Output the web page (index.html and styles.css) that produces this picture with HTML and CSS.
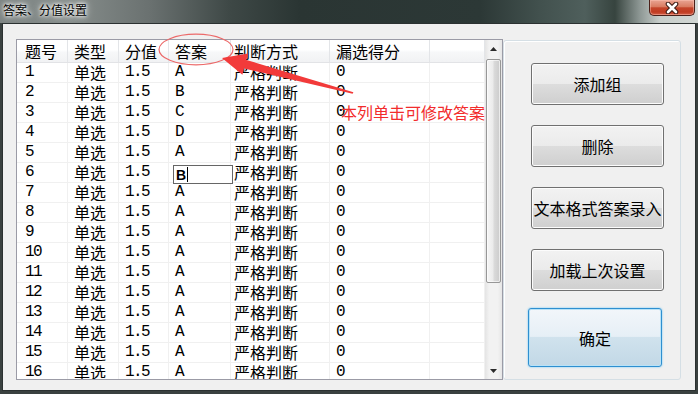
FILE: index.html
```html
<!DOCTYPE html>
<html lang="zh">
<head>
  <meta charset="UTF-8" />
  <title>答案、分值设置</title>
  <link rel="stylesheet" href="styles.css">
</head>
<body>

<div class="titlebar">
  <span class="title">答案、分值设置</span>
  <div class="close">
    <svg width="16" height="12" viewBox="0 0 16 12">
      <path d="M4 2 L12 10 M12 2 L4 10" stroke="#3b1a14" stroke-width="4.6" stroke-linecap="round"/>
      <path d="M4 2 L12 10 M12 2 L4 10" stroke="#ffffff" stroke-width="2.6" stroke-linecap="round"/>
    </svg>
  </div>
</div>

<div class="client">
  <div class="listview">
    <div class="grid">
      <div class="row head">
        <div class="cell c1">题号</div><div class="cell">类型</div><div class="cell">分值</div><div class="cell">答案</div><div class="cell c5">判断方式</div><div class="cell">漏选得分</div><div class="cell"></div>
      </div>
      <div class="row"><div class="cell c1 mono">1</div><div class="cell">单选</div><div class="cell mono">1.5</div><div class="cell mono">A</div><div class="cell c5">严格判断</div><div class="cell mono">0</div><div class="cell"></div></div>
      <div class="row"><div class="cell c1 mono">2</div><div class="cell">单选</div><div class="cell mono">1.5</div><div class="cell mono">B</div><div class="cell c5">严格判断</div><div class="cell mono">0</div><div class="cell"></div></div>
      <div class="row"><div class="cell c1 mono">3</div><div class="cell">单选</div><div class="cell mono">1.5</div><div class="cell mono">C</div><div class="cell c5">严格判断</div><div class="cell mono">0</div><div class="cell"></div></div>
      <div class="row"><div class="cell c1 mono">4</div><div class="cell">单选</div><div class="cell mono">1.5</div><div class="cell mono">D</div><div class="cell c5">严格判断</div><div class="cell mono">0</div><div class="cell"></div></div>
      <div class="row"><div class="cell c1 mono">5</div><div class="cell">单选</div><div class="cell mono">1.5</div><div class="cell mono">A</div><div class="cell c5">严格判断</div><div class="cell mono">0</div><div class="cell"></div></div>
      <div class="row"><div class="cell c1 mono">6</div><div class="cell">单选</div><div class="cell mono">1.5</div><div class="cell edit"><div class="editor">B<span class="caret"></span></div></div><div class="cell c5">严格判断</div><div class="cell mono">0</div><div class="cell"></div></div>
      <div class="row"><div class="cell c1 mono">7</div><div class="cell">单选</div><div class="cell mono">1.5</div><div class="cell mono">A</div><div class="cell c5">严格判断</div><div class="cell mono">0</div><div class="cell"></div></div>
      <div class="row"><div class="cell c1 mono">8</div><div class="cell">单选</div><div class="cell mono">1.5</div><div class="cell mono">A</div><div class="cell c5">严格判断</div><div class="cell mono">0</div><div class="cell"></div></div>
      <div class="row"><div class="cell c1 mono">9</div><div class="cell">单选</div><div class="cell mono">1.5</div><div class="cell mono">A</div><div class="cell c5">严格判断</div><div class="cell mono">0</div><div class="cell"></div></div>
      <div class="row"><div class="cell c1 mono">10</div><div class="cell">单选</div><div class="cell mono">1.5</div><div class="cell mono">A</div><div class="cell c5">严格判断</div><div class="cell mono">0</div><div class="cell"></div></div>
      <div class="row"><div class="cell c1 mono">11</div><div class="cell">单选</div><div class="cell mono">1.5</div><div class="cell mono">A</div><div class="cell c5">严格判断</div><div class="cell mono">0</div><div class="cell"></div></div>
      <div class="row"><div class="cell c1 mono">12</div><div class="cell">单选</div><div class="cell mono">1.5</div><div class="cell mono">A</div><div class="cell c5">严格判断</div><div class="cell mono">0</div><div class="cell"></div></div>
      <div class="row"><div class="cell c1 mono">13</div><div class="cell">单选</div><div class="cell mono">1.5</div><div class="cell mono">A</div><div class="cell c5">严格判断</div><div class="cell mono">0</div><div class="cell"></div></div>
      <div class="row"><div class="cell c1 mono">14</div><div class="cell">单选</div><div class="cell mono">1.5</div><div class="cell mono">A</div><div class="cell c5">严格判断</div><div class="cell mono">0</div><div class="cell"></div></div>
      <div class="row"><div class="cell c1 mono">15</div><div class="cell">单选</div><div class="cell mono">1.5</div><div class="cell mono">A</div><div class="cell c5">严格判断</div><div class="cell mono">0</div><div class="cell"></div></div>
      <div class="row"><div class="cell c1 mono">16</div><div class="cell">单选</div><div class="cell mono">1.5</div><div class="cell mono">A</div><div class="cell c5">严格判断</div><div class="cell mono">0</div><div class="cell"></div></div>
    </div>
    <div class="vscroll">
      <div class="arrow"><svg width="7" height="4" viewBox="0 0 7 4"><path d="M3.5 0 L7 4 L0 4 Z" fill="#2a2a2a"/></svg></div>
      <div class="thumb"></div>
      <div class="track"></div>
      <div class="arrow"><svg width="7" height="4" viewBox="0 0 7 4"><path d="M0 0 L7 0 L3.5 4 Z" fill="#2a2a2a"/></svg></div>
    </div>
  </div>

  <div class="panel">
    <button class="btn">添加组</button>
    <button class="btn">删除</button>
    <button class="btn">文本格式答案录入</button>
    <button class="btn">加载上次设置</button>
    <button class="btn default">确定</button>
  </div>

  <!-- annotation drawn over the dialog -->
  <svg class="annot" width="692" height="366" viewBox="3 24 692 366">
    <ellipse cx="196" cy="49.5" rx="37" ry="15.3" fill="none" stroke="#ec6a6a" stroke-width="1.2"/>
    <polygon points="222,58 248,53.6 246.4,59.9 353.4,92.3 352.6,93.7 244,68.5 242.4,74.8" fill="#f23a3a"/>
  </svg>
  <span class="note">本列单击可修改答案</span>
</div>

</body>
</html>
```

FILE: styles.css
```css
body {
  margin: 0;
  width: 698px;
  height: 394px;
  overflow: hidden;
  background: #3a4140;
  font-family: "Noto Sans CJK SC", sans-serif;
}
.titlebar {
  height: 23px;
  display: flex;
  justify-content: space-between;
  align-items: flex-start;
  background: linear-gradient(to right, #7d8483 0, #868d8b 70px, #6a7170 150px, #3e4846 230px, #2a3533 300px, #2c3836 480px, #42514e 540px, #4f5f5c 585px, #37443f 615px, #8e9895 640px, #c8cecb 660px, #d2d7d4 698px);
}
.title {
  font-size: 12px;
  line-height: 14px;
  margin: 3px 0 0 3px;
  color: #000;
  text-shadow: 0 0 5px #fff, 0 0 3px #fff, 0 0 8px #e8ecea;
}
.close {
  width: 46px;
  height: 16px;
  margin-right: 3px;
  box-sizing: border-box;
  border: 1px solid #4b2019;
  border-top: none;
  border-radius: 0 0 5px 5px;
  background: linear-gradient(#e9a493 0, #d97c62 45%, #c4452b 52%, #c13c22 80%, #d2604a 100%);
  box-shadow: inset 0 0 0 1px rgba(255, 200, 185, 0.45);
  display: flex;
  justify-content: center;
  align-items: center;
}
.client {
  position: relative;
  height: 368px;
  box-sizing: border-box;
  margin: 0 2px;
  border: 1px solid #2b3131;
  background: #f0f0f0;
  padding: 15px 0 0 13px;
  display: flex;
  align-items: flex-start;
}
.listview {
  width: 487px;
  height: 341px;
  box-sizing: border-box;
  border: 1px solid #9b9ba6;
  background: #fff;
  display: flex;
  overflow: hidden;
}
.grid {
  width: 468px;
  overflow: hidden;
}
.row {
  display: grid;
  grid-template-columns: 51px 51px 50px 62px 99px 100px 55px;
  height: 20px;
  box-sizing: border-box;
  border-bottom: 1px solid #f0f0f0;
}
.cell {
  border-right: 1px solid #f0f0f0;
  padding-left: 6px;
  font-size: 16px;
  line-height: 19px;
  white-space: nowrap;
  overflow: hidden;
  color: #000;
}
.cell.c1 {
  padding-left: 8px;
}
.cell.c5 {
  padding-left: 3px;
}
.mono {
  font-family: "Liberation Mono", monospace;
  letter-spacing: -1.6px;
}
.head {
  height: 23px;
  background: linear-gradient(#ffffff 0, #ffffff 45%, #f7f8f9 55%, #f1f2f4 100%);
  border-bottom: 1px solid #e2e3e6;
}
.head .cell {
  line-height: 22px;
  border-right: 1px solid #e3e5e8;
}
.cell.edit {
  padding-left: 4px;
  overflow: visible;
}
.editor {
  width: 60px;
  height: 19px;
  margin-top: 2px;
  box-sizing: border-box;
  border: 1px solid #666;
  background: #fff;
  padding-left: 2px;
  display: flex;
  align-items: center;
  font: bold 14px "Liberation Sans", sans-serif;
  position: relative;
}
.caret {
  width: 1px;
  height: 15px;
  margin-left: 1px;
  background: #000;
}
.vscroll {
  width: 17px;
  display: flex;
  flex-direction: column;
  background: linear-gradient(to right, #e4e4e4, #f2f2f2 25%, #f2f2f2 75%, #e6e6e6);
}
.arrow {
  height: 17px;
  display: flex;
  align-items: center;
  justify-content: center;
}
.thumb {
  height: 224px;
  margin: 2px 1px 0 1px;
  box-sizing: border-box;
  border: 1px solid #979797;
  border-radius: 2px;
  background: linear-gradient(to right, #f6f6f6 0, #ebebeb 45%, #dadada 55%, #cbcbcb 100%);
  box-shadow: inset 0 0 0 1px rgba(255, 255, 255, 0.6);
}
.track {
  flex: 1;
}
.panel {
  width: 178px;
  height: 340px;
  box-sizing: border-box;
  margin-top: 1px;
  border: 1px solid #d5dfe5;
  border-radius: 3px;
  box-shadow: inset 1px 1px 0 #fff;
  padding: 22px 0 0 27px;
  display: flex;
  flex-direction: column;
  gap: 20px;
}
.btn {
  width: 133px;
  height: 42px;
  box-sizing: border-box;
  padding: 0;
  border: 1px solid #707070;
  border-radius: 3px;
  background: linear-gradient(#f2f2f2 0, #ebebeb 50%, #dddddd 50%, #cfcfcf 100%);
  box-shadow: inset 0 0 0 1px #fcfcfc;
  font: 16px "Noto Sans CJK SC", sans-serif;
  line-height: 20px;
  color: #000;
  white-space: nowrap;
}
.btn.default {
  width: 134px;
  height: 59px;
  margin: -3px 0 0 -3px;
  border-color: #2e8fd0;
  background: linear-gradient(#f2f6fa 0, #e6eff6 48%, #d0e2ed 50%, #c2d8e6 100%);
  box-shadow: 0 0 2px #5cc0f5, inset 0 0 0 1px #b8e2f7;
}
.annot {
  position: absolute;
  left: 0;
  top: 0;
  pointer-events: none;
}
.note {
  position: absolute;
  left: 338px;
  top: 79px;
  font-size: 16px;
  line-height: 18px;
  color: #f22c2c;
  white-space: nowrap;
}
```
